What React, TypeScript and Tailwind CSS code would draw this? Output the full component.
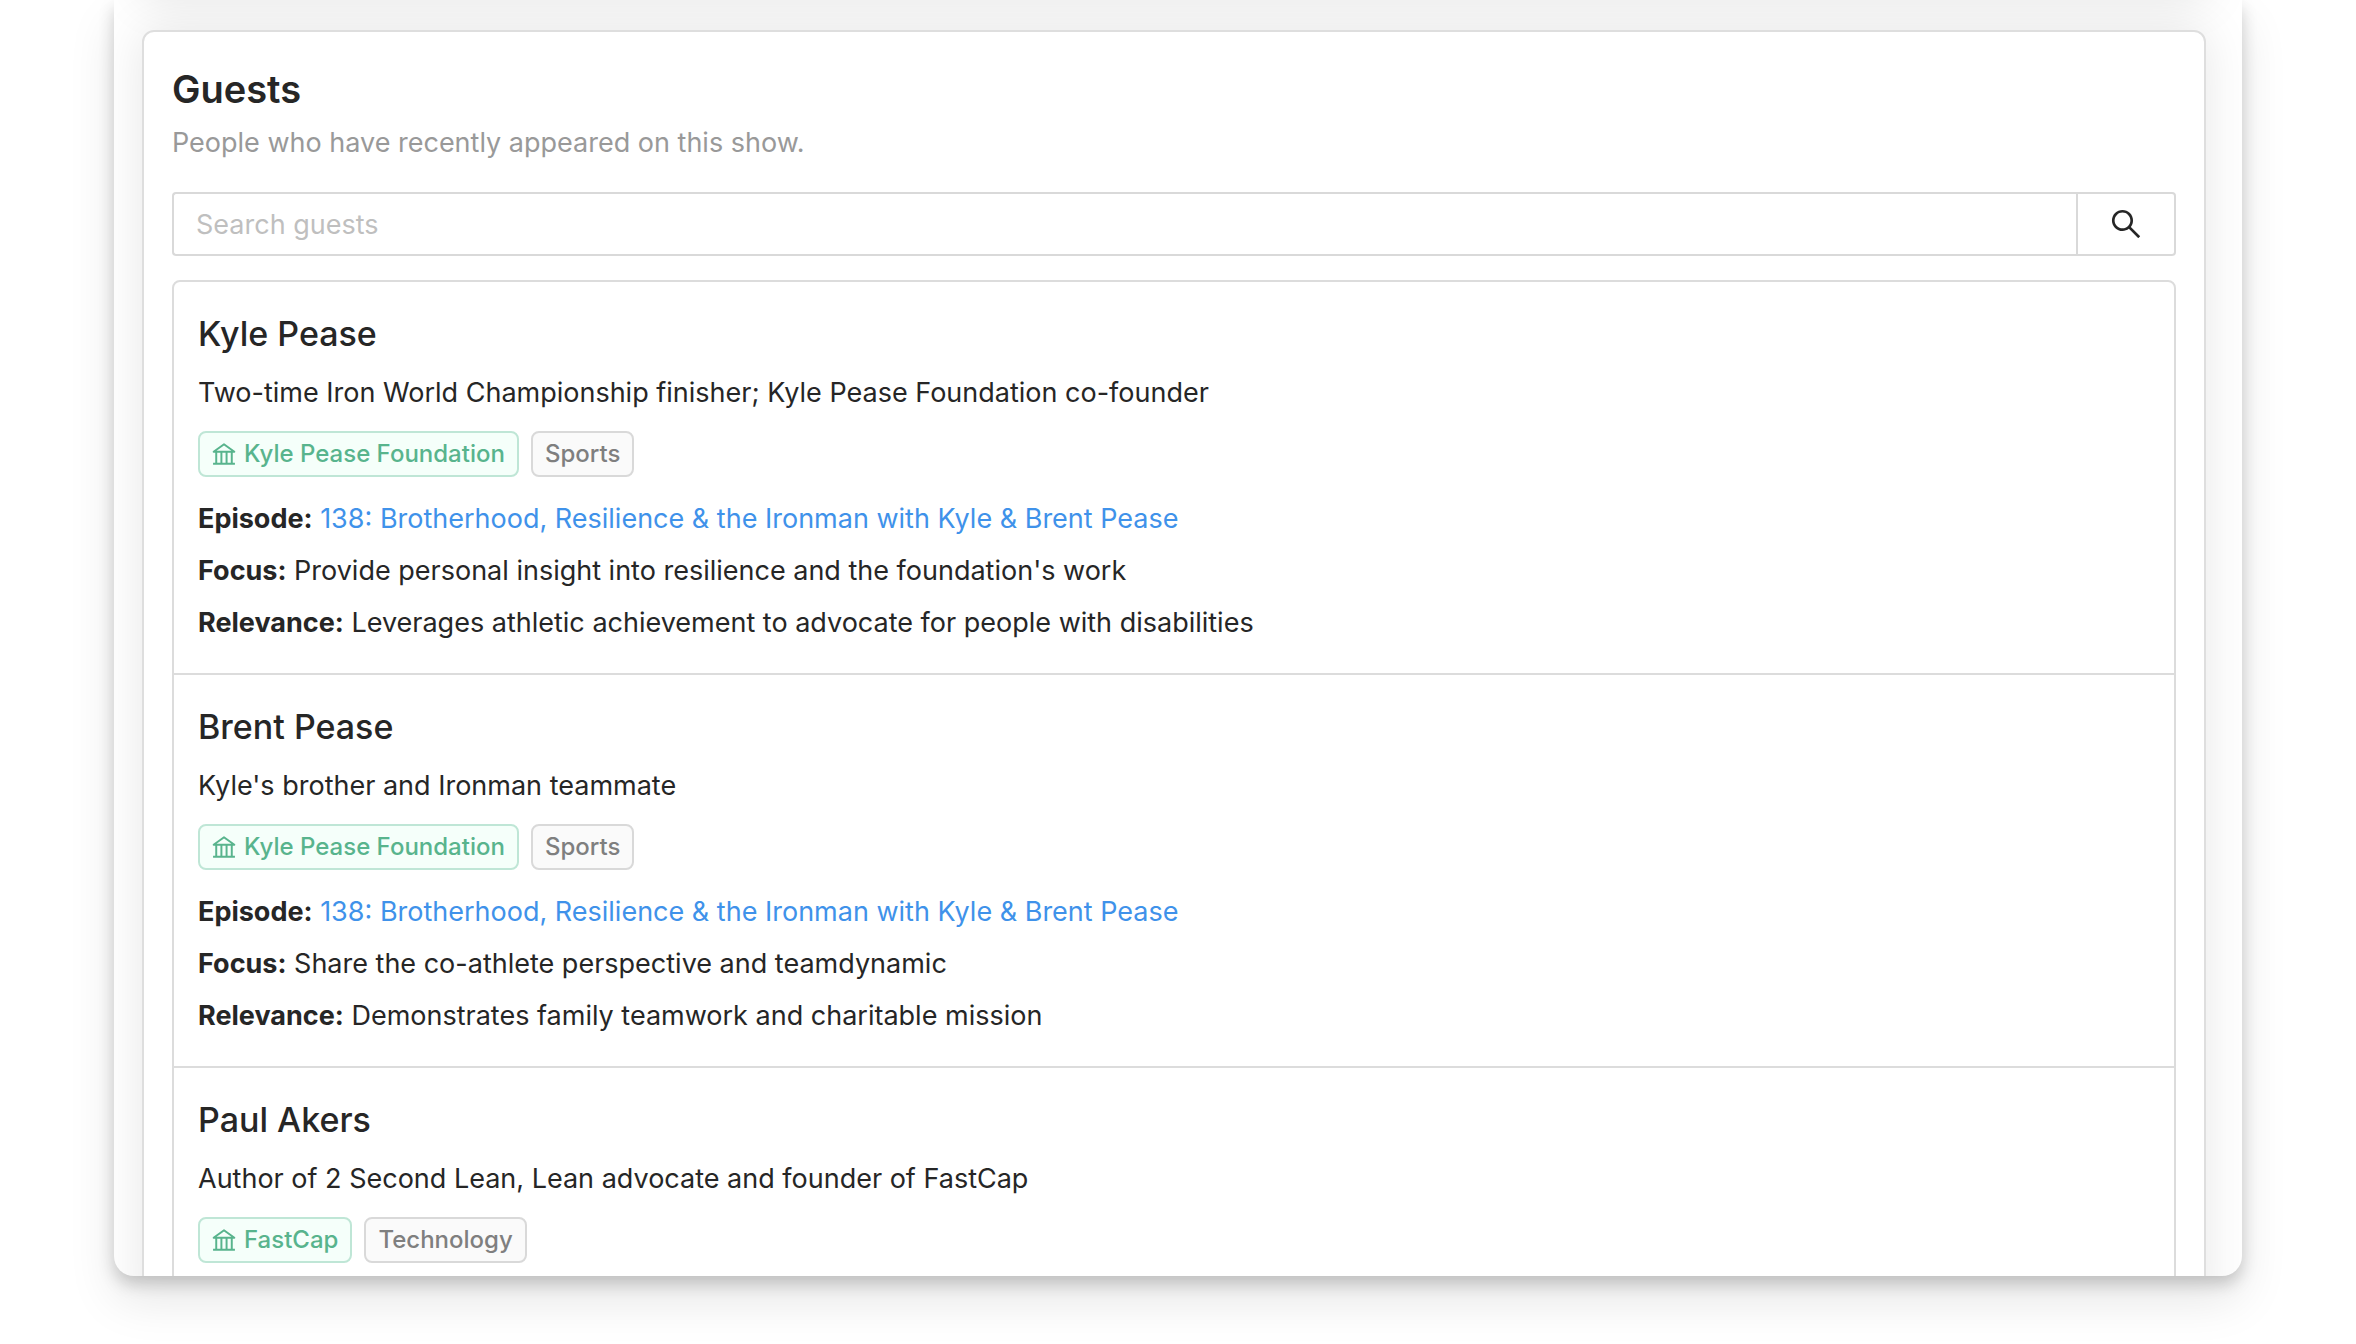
import React, { useState } from 'react';
import { AiOutlineBank, AiOutlineSearch } from 'react-icons/ai';

interface Guest {
  id: number;
  name: string;
  bio: string;
  organization: string;
  industry: string;
  episode?: string;
  focus?: string;
  relevance?: string;
}

const guests: Guest[] = [
  {
    id: 1,
    name: 'Kyle Pease',
    bio: 'Two-time Iron World Championship finisher; Kyle Pease Foundation co-founder',
    organization: 'Kyle Pease Foundation',
    industry: 'Sports',
    episode: '138: Brotherhood, Resilience & the Ironman with Kyle & Brent Pease',
    focus: "Provide personal insight into resilience and the foundation's work",
    relevance: 'Leverages athletic achievement to advocate for people with disabilities',
  },
  {
    id: 2,
    name: 'Brent Pease',
    bio: "Kyle's brother and Ironman teammate",
    organization: 'Kyle Pease Foundation',
    industry: 'Sports',
    episode: '138: Brotherhood, Resilience & the Ironman with Kyle & Brent Pease',
    focus: 'Share the co-athlete perspective and teamdynamic',
    relevance: 'Demonstrates family teamwork and charitable mission',
  },
  {
    id: 3,
    name: 'Paul Akers',
    bio: 'Author of 2 Second Lean, Lean advocate and founder of FastCap',
    organization: 'FastCap',
    industry: 'Technology',
  },
];

const GuestItem: React.FC<{ guest: Guest }> = ({ guest }) => (
  <li className="px-6 pt-[27px] pb-6 border-b-2 border-[#dcdcdc] last:border-b-0">
    <h3 className="text-[34px] leading-[50px] font-medium">{guest.name}</h3>
    <p className="mt-3 text-[27px] leading-[44px]">{guest.bio}</p>
    <div className="mt-4 flex gap-3 text-[24px] leading-[42px] font-medium">
      <span className="flex items-center gap-1.5 pl-2.5 pr-3 border-2 rounded-lg border-[#bfe6d6] bg-[#f5fffa] text-[#58b48d]">
        <AiOutlineBank className="size-7" />
        {guest.organization}
      </span>
      <span className="px-3 border-2 rounded-lg border-[#d9d9d9] bg-[#fafafa] text-[#7f7f7f]">{guest.industry}</span>
    </div>
    {guest.episode && (
      <div className="mt-4 text-[27px] leading-[52px]">
        <p>
          <strong className="font-bold">Episode:</strong>{' '}
          <a href="#" className="text-[#3f92ea]">{guest.episode}</a>
        </p>
        <p>
          <strong className="font-bold">Focus:</strong> {guest.focus}
        </p>
        <p>
          <strong className="font-bold">Relevance:</strong> {guest.relevance}
        </p>
      </div>
    )}
  </li>
);

const App: React.FC = () => {
  const [search, setSearch] = useState('');

  const visible = guests.filter(g => g.name.toLowerCase().includes(search.toLowerCase()));

  return (
    <div className="h-screen overflow-hidden bg-white px-[114px] pb-17 font-['Inter',sans-serif] text-[#262626]">
      <div className="flex h-full flex-col gap-[30px] overflow-hidden rounded-b-[20px] bg-white pl-7 pr-9 shadow-[0_24px_48px_rgba(0,0,0,0.1),0_8px_16px_rgba(0,0,0,0.18)]">
        {/* bottom edge of the section scrolled out above */}
        <div className="-mt-20 h-20 shrink-0 shadow-[0_0_48px_rgba(0,0,0,0.1)]" />

        <section className="shrink-0 rounded-xl border-2 border-[#dedede] bg-white p-7 shadow-[0_0_48px_rgba(0,0,0,0.1)]">
          <h2 className="text-[38px] leading-[58px] font-semibold">Guests</h2>
          <p className="text-[27px] leading-[50px] text-[#999999]">People who have recently appeared on this show.</p>

          <form className="mt-6 flex" onSubmit={(e) => e.preventDefault()}>
            <input
              type="text"
              aria-label="Search guests"
              placeholder="Search guests"
              className="h-16 flex-1 rounded-l border-2 border-r-0 border-[#d9d9d9] px-[22px] text-[27px] placeholder:text-[#bfbfbf]"
              value={search}
              onChange={(e) => setSearch(e.target.value)}
            />
            <button type="submit" aria-label="Search" className="flex h-16 w-25 items-center justify-center rounded-r border-2 border-[#d9d9d9]">
              <AiOutlineSearch className="size-9" />
            </button>
          </form>

          <ul className="mt-6 rounded-lg border-2 border-[#dcdcdc]">
            {visible.map(guest => (
              <GuestItem key={guest.id} guest={guest} />
            ))}
          </ul>
        </section>
      </div>
    </div>
  );
};

export default App;
